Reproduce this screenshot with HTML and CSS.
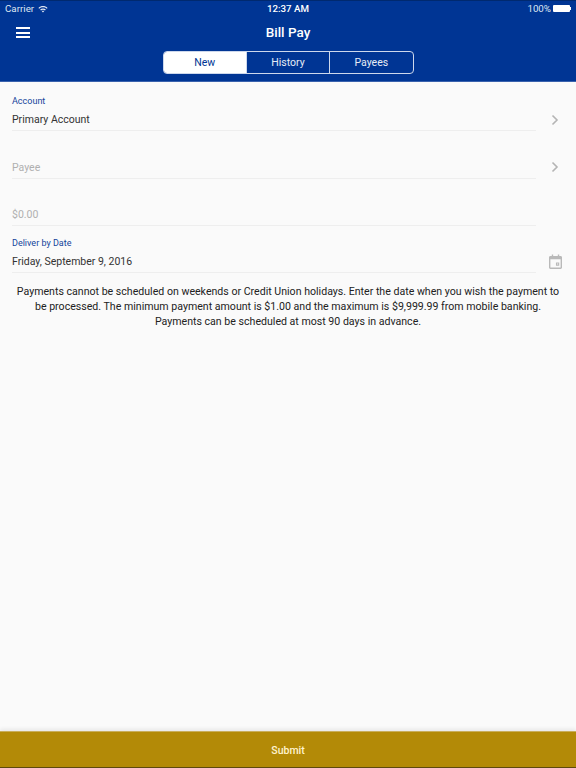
FILE: index.html
```html
<!DOCTYPE html>
<html>
    <head>
        <meta charset="utf-8">
        <title>Bill Pay</title>
        <link rel="stylesheet" href="styles.css">
    </head>
    <body>
        <div class="header">
            <div class="status">
                <div class="status-left">
                    <span>Carrier</span>
                    <svg class="wifi" width="10" height="8" viewBox="0 0 12 9">
                        <path d="M0.5 3.2C3.6 0.3 8.4 0.3 11.5 3.2L10.5 4.2C8 1.9 4 1.9 1.5 4.2Z" fill="#dfe6f2"/>
                        <path d="M2.6 5.2C4.5 3.5 7.5 3.5 9.4 5.2L8.4 6.2C7 5 5 5 3.6 6.2Z" fill="#dfe6f2"/>
                        <path d="M4.6 7.1C5.4 6.4 6.6 6.4 7.4 7.1L6 8.6Z" fill="#dfe6f2"/>
                    </svg>
                </div>
                <div class="status-time">12:37 AM</div>
                <div class="status-right">
                    <span>100%</span>
                    <div class="battery"></div>
                    <div class="battery-tip"></div>
                </div>
            </div>
            <div class="titlebar">
                <div class="menu">
                    <span></span>
                    <span></span>
                    <span></span>
                </div>
                <div class="title">Bill Pay</div>
            </div>
            <div class="tabs">
                <div class="tab tab-active">New</div>
                <div class="tab">History</div>
                <div class="tab">Payees</div>
            </div>
        </div>
        <div class="content">
            <div class="field">
                <div class="field-main">
                    <div class="label">Account</div>
                    <div class="value">Primary Account</div>
                </div>
                <svg class="chevron" width="8" height="12" viewBox="0 0 8 12">
                    <path d="M1.5 1.5L6 6L1.5 10.5" fill="none" stroke="#b4b4b4" stroke-width="1.6"/>
                </svg>
            </div>
            <div class="field">
                <div class="field-main">
                    <div class="label"></div>
                    <div class="value placeholder">Payee</div>
                </div>
                <svg class="chevron" width="8" height="12" viewBox="0 0 8 12">
                    <path d="M1.5 1.5L6 6L1.5 10.5" fill="none" stroke="#b4b4b4" stroke-width="1.6"/>
                </svg>
            </div>
            <div class="field">
                <div class="field-main">
                    <div class="label"></div>
                    <div class="value placeholder">$0.00</div>
                </div>
            </div>
            <div class="field">
                <div class="field-main">
                    <div class="label">Deliver by Date</div>
                    <div class="value">Friday, September 9, 2016</div>
                </div>
                <svg class="calendar" width="13" height="15" viewBox="0 0 14 16">
                    <path d="M3 0.5H4.5V2H9.5V0.5H11V2H12.5C13.3 2 14 2.7 14 3.5V14.5C14 15.3 13.3 16 12.5 16H1.5C0.7 16 0 15.3 0 14.5V3.5C0 2.7 0.7 2 1.5 2H3ZM1.5 5.5V14.5H12.5V5.5ZM7.5 9H11V12.5H7.5ZM8.7 10.2V11.3H9.8V10.2Z" fill="#b9b9b9" fill-rule="evenodd"/>
                </svg>
            </div>
            <p class="note">Payments cannot be scheduled on weekends or Credit Union holidays. Enter the date when you wish the payment to be processed. The minimum payment amount is $1.00 and the maximum is $9,999.99 from mobile banking. Payments can be scheduled at most 90 days in advance.</p>
        </div>
        <div class="submit">Submit</div>
    </body>
</html>
```

FILE: styles.css
```css
*{
    margin: 0;
    padding: 0;
    box-sizing: border-box;
}
html, body{
    height: 100%;
}
body{
    width: 576px;
    height: 768px;
    display: flex;
    flex-direction: column;
    overflow: hidden;
    background-color: #fafafa;
    font-family: Roboto, "Liberation Sans", sans-serif;
}
.header{
    height: 82px;
    flex-shrink: 0;
    background-color: #003594;
    border-top: 1px solid #00296f;
    border-bottom: 1px solid #3a62ad;
    color: #fff;
}
.status{
    height: 15px;
    padding: 0 5px;
    display: grid;
    grid-template-columns: 1fr auto 1fr;
    align-items: center;
    font-size: 9.75px;
    color: #dfe6f2;
}
.status-left{
    display: flex;
    align-items: center;
    gap: 4px;
}
.status-time{
    font-weight: 500;
    color: #fff;
}
.status-right{
    display: flex;
    align-items: center;
    justify-content: flex-end;
}
.battery{
    width: 17px;
    height: 7px;
    margin-left: 2px;
    background-color: #fff;
    border-radius: 1px;
}
.battery-tip{
    width: 1px;
    height: 3px;
    background-color: #fff;
}
.titlebar{
    height: 33px;
    padding-left: 16px;
    display: flex;
    align-items: center;
    position: relative;
}
.menu{
    width: 14px;
    display: flex;
    flex-direction: column;
    gap: 2.5px;
}
.menu span{
    height: 2px;
    background-color: #fff;
}
.title{
    position: absolute;
    left: 0;
    right: 0;
    padding-bottom: 2px;
    text-align: center;
    font-size: 13.5px;
    font-weight: 500;
}
.tabs{
    width: 251px;
    height: 23px;
    margin: 2px auto 0;
    display: flex;
    border: 1px solid #cdd8ec;
    border-radius: 4px;
    overflow: hidden;
}
.tab{
    width: 84px;
    display: flex;
    align-items: center;
    justify-content: center;
    font-size: 10.5px;
    border-left: 1px solid #cdd8ec;
    color: #e6ecf6;
}
.tab:first-child{
    width: 83px;
    border-left: 0;
}
.tab-active{
    background-color: #fff;
    color: #003594;
}
.content{
    flex: 1;
    padding-top: 2px;
}
.field{
    height: 47.3px;
    padding: 0 12px;
    display: flex;
    align-items: flex-end;
}
.field-main{
    width: 524px;
    height: 37px;
    flex-shrink: 0;
    border-bottom: 1px solid #eeeeee;
}
.label{
    height: 14px;
    font-size: 9px;
    line-height: 14px;
    color: #14449a;
}
.value{
    height: 22px;
    font-size: 10.5px;
    line-height: 24px;
    color: #333;
}
.placeholder{
    color: #b0b0b0;
}
.chevron{
    margin: 0 0 5.5px 15px;
}
.calendar{
    margin: 0 0 4px 13px;
}
.note{
    padding: 11px 12px 0;
    text-align: center;
    font-size: 10.6px;
    line-height: 15px;
    color: #222;
}
.submit{
    height: 37px;
    padding-top: 1px;
    flex-shrink: 0;
    display: flex;
    align-items: center;
    justify-content: center;
    background-color: #b38a07;
    border-top: 1px solid #c9ae5c;
    border-bottom: 1px solid #5e4a0c;
    box-shadow: 0 -2px 4px rgba(0, 0, 0, 0.08);
    font-size: 10.5px;
    font-weight: 500;
    color: #fff3cf;
}
```
